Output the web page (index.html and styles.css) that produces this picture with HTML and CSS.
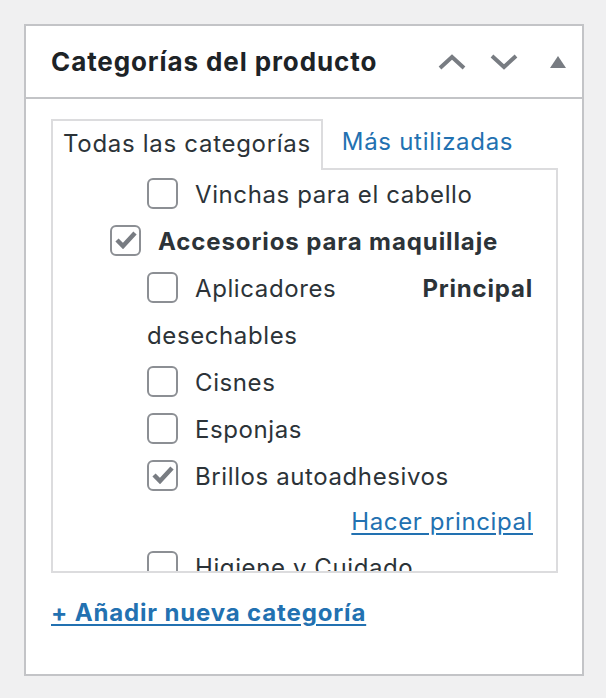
FILE: index.html
```html
<!DOCTYPE html>
<html lang="es">
  <head>
    <meta charset="UTF-8" />
    <meta name="viewport" content="width=device-width, initial-scale=1.0" />
    <title>Categorías del producto</title>
    <link rel="stylesheet" href="styles.css">
  </head>
  <body>
    <div class="postbox">
      <div class="postbox-header">
        <h2 class="hndle">Categorías del producto</h2>
        <div class="handle-actions">
          <button class="handle-btn" type="button" aria-label="Subir">
            <svg width="28" height="16" viewBox="0 0 28 16"><polyline points="2,14 14,3 26,14" fill="none" stroke="#787c82" stroke-width="4" /></svg>
          </button>
          <button class="handle-btn" type="button" aria-label="Bajar">
            <svg width="28" height="16" viewBox="0 0 28 16"><polyline points="2,2 14,13 26,2" fill="none" stroke="#787c82" stroke-width="4" /></svg>
          </button>
          <button class="handle-btn toggle" type="button" aria-label="Cerrar">
            <svg width="16" height="12" viewBox="0 0 16 12"><polygon points="8,0 16,12 0,12" fill="#787c82" /></svg>
          </button>
        </div>
      </div>

      <div class="inside">
        <ul class="category-tabs">
          <li class="tabs">Todas las categorías</li>
          <li><a href="#">Más utilizadas</a></li>
        </ul>

        <div class="tabs-panel">
          <ul class="checklist">
            <li>
              <ul class="children">
                <li><label><span class="cb"></span>Vinchas para el cabello</label></li>
              </ul>
            </li>
            <li>
              <label class="parent"><span class="cb checked"><svg width="22" height="18" viewBox="0 0 22 18"><polyline points="2,9 8,15 20,2" fill="none" stroke="#787c82" stroke-width="4.5" /></svg></span>Accesorios para maquillaje</label>
              <ul class="children">
                <li><span class="primary-label">Principal</span><label><span class="cb"></span>Aplicadores desechables</label></li>
                <li><label><span class="cb"></span>Cisnes</label></li>
                <li><label><span class="cb"></span>Esponjas</label></li>
                <li>
                  <label><span class="cb checked"><svg width="22" height="18" viewBox="0 0 22 18"><polyline points="2,9 8,15 20,2" fill="none" stroke="#787c82" stroke-width="4.5" /></svg></span>Brillos autoadhesivos</label>
                  <div class="make-primary"><a href="#">Hacer principal</a></div>
                </li>
                <li><label><span class="cb"></span>Higiene y Cuidado</label></li>
              </ul>
            </li>
          </ul>
        </div>

        <p class="add-new"><a href="#">+ Añadir nueva categoría</a></p>
      </div>
    </div>
  </body>
</html>
```

FILE: styles.css
```css
body {
  margin: 0;
  padding: 24px 22px 24px 24px;
  background-color: #f0f0f1;
  font-family: Inter, "Liberation Sans", sans-serif;
  color: #2c3338;
}

.postbox {
  background: #fff;
  border: 2px solid #c3c4c7;
  height: 652px;
  box-sizing: border-box;
}

.postbox-header {
  display: flex;
  align-items: center;
  justify-content: space-between;
  height: 71px;
  border-bottom: 2px solid #c3c4c7;
  padding: 0 16px 0 25px;
}

.hndle {
  margin: 0;
  font-size: 26px;
  font-weight: 700;
  letter-spacing: 0.9px;
  color: #1d2327;
}

.handle-actions {
  display: flex;
  align-items: center;
  gap: 24px;
}

.handle-btn {
  background: none;
  border: 0;
  padding: 0;
  display: flex;
}

.handle-btn.toggle {
  margin-left: 8px;
}

.inside {
  padding: 20px 24px 0 25px;
}

.category-tabs {
  list-style: none;
  margin: 0;
  padding: 0;
  display: flex;
  font-size: 24px;
  letter-spacing: 0.7px;
}

.category-tabs li {
  height: 49px;
  line-height: 46px;
}

.category-tabs .tabs {
  border: 2px solid #dcdcde;
  border-bottom: 0;
  padding: 0 10px 0 10px;
  margin-bottom: -2px;
  background: #fff;
}

.category-tabs a {
  display: block;
  color: #2271b1;
  text-decoration: none;
  padding-left: 19px;
}

.tabs-panel {
  border: 2px solid #dcdcde;
  height: 405px;
  overflow: hidden;
  box-sizing: border-box;
  width: 507px;
}

.checklist,
.children {
  list-style: none;
  margin: 0;
  padding: 0;
}

.checklist {
  padding: 1px 23px 0 57px;
  font-size: 24px;
  letter-spacing: 0.6px;
  line-height: 47px;
}

.children {
  margin-left: 37px;
}

label {
  color: #2c3338;
}

.parent {
  font-weight: 700;
  letter-spacing: 0.9px;
}

.cb {
  display: inline-flex;
  align-items: center;
  justify-content: center;
  width: 31px;
  height: 31px;
  box-sizing: border-box;
  border: 2px solid #8c8f94;
  border-radius: 6px;
  vertical-align: middle;
  margin: 0 17px 6px 0;
}

.primary-label {
  float: right;
  font-weight: 700;
  letter-spacing: 0.8px;
}

.make-primary {
  text-align: right;
  line-height: 44px;
}

.make-primary a,
.add-new a {
  color: #2271b1;
  text-decoration: underline;
  text-underline-offset: 3px;
}

.add-new {
  margin: 25px 0 0;
  font-size: 24px;
  font-weight: 700;
  letter-spacing: 0.85px;
}
```
